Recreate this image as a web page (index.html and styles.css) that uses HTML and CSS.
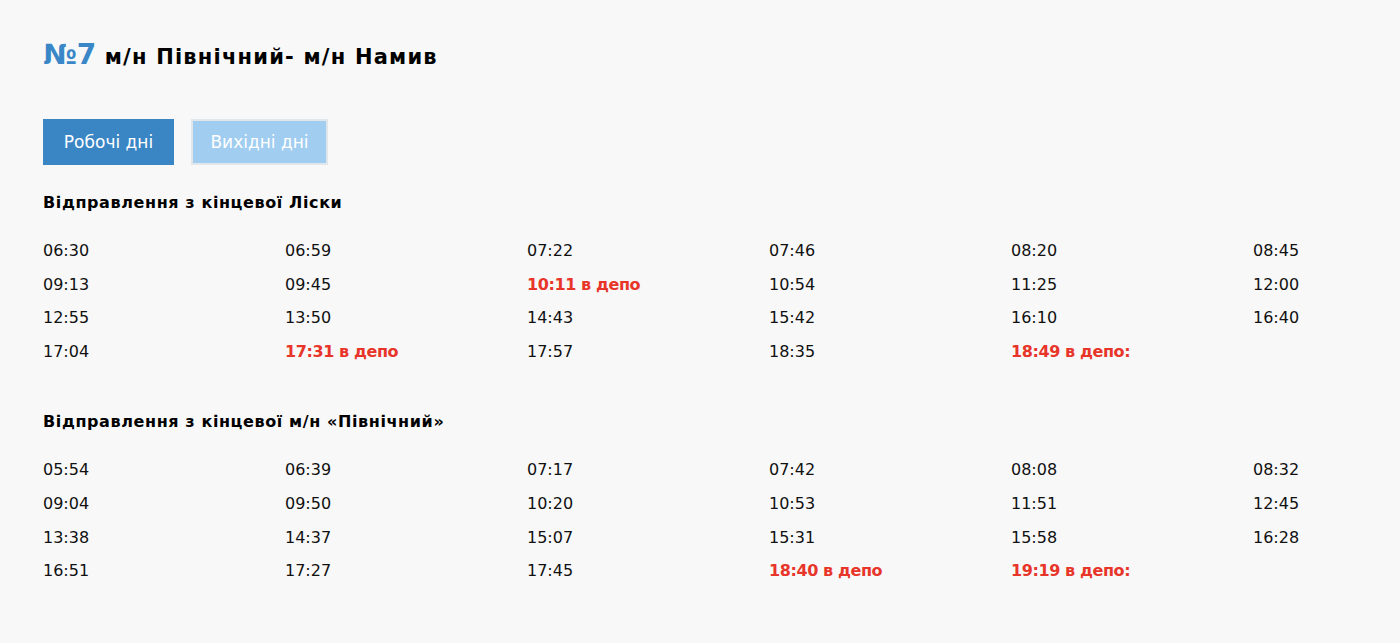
FILE: index.html
```html
<!DOCTYPE html>
<html lang="uk">
<head>
<meta charset="utf-8">
<link rel="stylesheet" href="styles.css">
</head>
<body>
<main class="page">
  <h1 class="title"><span class="num">№7</span> м/н Північний- м/н Намив</h1>
  <div class="tabs">
    <button class="tab tab-active">Робочі дні</button>
    <button class="tab tab-inactive">Вихідні дні</button>
  </div>
  <h2 class="section-title">Відправлення з кінцевої Ліски</h2>
  <div class="times">
    <span>06:30</span><span>06:59</span><span>07:22</span><span>07:46</span><span>08:20</span><span>08:45</span>
    <span>09:13</span><span>09:45</span><span class="depot">10:11 в депо</span><span>10:54</span><span>11:25</span><span>12:00</span>
    <span>12:55</span><span>13:50</span><span>14:43</span><span>15:42</span><span>16:10</span><span>16:40</span>
    <span>17:04</span><span class="depot">17:31 в депо</span><span>17:57</span><span>18:35</span><span class="depot">18:49 в депо:</span><span></span>
  </div>
  <h2 class="section-title second">Відправлення з кінцевої м/н «Північний»</h2>
  <div class="times">
    <span>05:54</span><span>06:39</span><span>07:17</span><span>07:42</span><span>08:08</span><span>08:32</span>
    <span>09:04</span><span>09:50</span><span>10:20</span><span>10:53</span><span>11:51</span><span>12:45</span>
    <span>13:38</span><span>14:37</span><span>15:07</span><span>15:31</span><span>15:58</span><span>16:28</span>
    <span>16:51</span><span>17:27</span><span>17:45</span><span class="depot">18:40 в депо</span><span class="depot">19:19 в депо:</span><span></span>
  </div>
</main>
</body>
</html>
```

FILE: styles.css
```css
html, body {
  margin: 0;
  padding: 0;
  background: #f8f8f8;
}
body {
  font-family: "DejaVu Sans", sans-serif;
  color: #111;
  overflow: hidden;
}
.page {
  padding: 35px 43px 0;
}
.title {
  margin: 0;
  font-size: 21px;
  line-height: 40px;
  font-weight: 700;
  color: #000;
  letter-spacing: 1.2px;
}
.num {
  color: #3a87c8;
  font-size: 28px;
  letter-spacing: 0;
}
.tabs {
  display: flex;
  gap: 17px;
  margin-top: 42px;
}
.tab {
  font-family: inherit;
  font-size: 17px;
  color: #fff;
  height: 46px;
  border: none;
  padding: 0;
  cursor: pointer;
}
.tab-active {
  background: #3a86c5;
  width: 131px;
}
.tab-inactive {
  background: #a0cdf0;
  border: 2px solid #e1e6eb;
  width: 137px;
}
.section-title {
  margin: 26px 0 0;
  font-size: 16px;
  line-height: 24px;
  font-weight: 700;
  color: #000;
  letter-spacing: 0.6px;
}
.section-title.second {
  margin-top: 42px;
}
.times {
  display: grid;
  grid-template-columns: repeat(5, 242px) auto;
  margin-top: 19px;
  font-size: 16px;
  line-height: 33.6px;
  color: #111;
}
.depot {
  color: #e8352a;
  font-weight: 700;
  letter-spacing: -0.4px;
}
```
